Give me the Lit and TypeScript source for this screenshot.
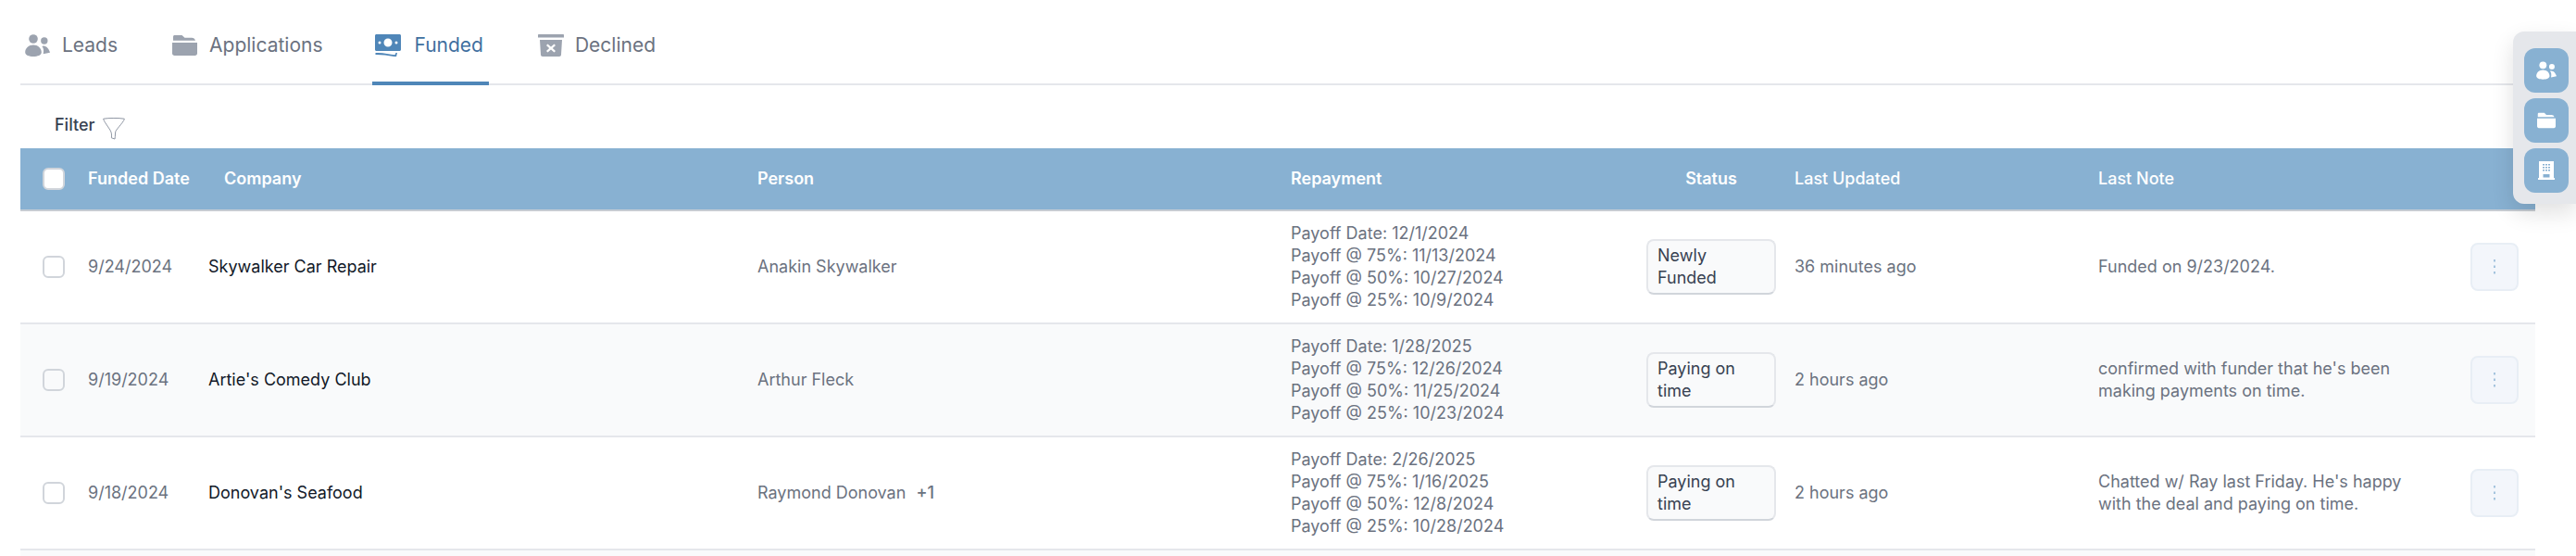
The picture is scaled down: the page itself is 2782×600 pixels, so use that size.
import { LitElement, html, css, svg } from "lit";
import { customElement } from "lit/decorators.js";

const users = svg`<circle cx="9" cy="5" r="4.8"/><path d="M9 11.5c-4.8 0-8.8 3.4-8.8 8 0 3 4.2 4.5 8.8 4.5s8.8-1.500 8.800-4.500c0-4.600-4-8-8.800-8z"/><circle cx="20.800" cy="7" r="3.700"/><path d="M20 12.500c3.300.2 6 3.300 7 7.300l-7.300 1.400c.5-3.300.7-6-1.300-8.200.5-.3 1-.5 1.600-.5z"/>`;
const folder = svg`<path d="M2 0h8.500l3 2.800H21c2 0 3.500 1.200 4 3H1V2c0-1 .5-2 1-2z"/><path d="M0 8h27v11.500c0 1.500-1 2.500-2.500 2.500h-22C1 22 0 21 0 19.500z"/>`;
const money = svg`<path fill-rule="evenodd" d="M1.500 0h25C27.300 0 28 .7 28 1.500v15c0 .8-.7 1.500-1.500 1.500h-25C.7 18 0 17.300 0 16.500v-15C0 .7.700 0 1.500 0zM14 4.500a4.500 4.500 0 1 0 0 9 4.500 4.500 0 0 0 0-9zM5 7.500a1.500 1.500 0 1 0 0 3 1.500 1.500 0 0 0 0-3zm18 0a1.500 1.500 0 1 0 0 3 1.500 1.500 0 0 0 0-3z"/><path d="M.5 20c7-.6 15 1.300 21 2.300l1-2.300h1.500l-1 4.400C15 23 7 21.800.5 22z"/>`;
const trash = svg`<path d="M1 0h26c.6 0 1 .4 1 1v2.500H0V1c0-.6.400-1 1-1z"/><path fill-rule="evenodd" d="M2 6h24l-1 16c0 1.200-.8 2-2 2H5c-1.200 0-2-.8-2-2zM10.500 10.500L9 12l3.200 3L9 18l1.500 1.500 3.500-3 3.500 3L19 18l-3.200-3L19 12l-1.500-1.500-3.500 3z"/>`;
const building = svg`<path fill-rule="evenodd" d="M1 0h16v18h1v2H0v-2h1zM5 3v1.500h2V3zm3 0v1.500h2V3zm3 0v1.500h2V3zM5 6v1.500h2V6zm3 0v1.500h2V6zm3 0v1.500h2V6zM5 9v1.500h2V9zm3 0v1.500h2V9zm3 0v1.500h2V9zM5.500 14v3.500h7V14z"/>`;

type Row = { date: string; company: string; person: string; extra?: string; pay: string[]; status: string; updated: string; note: string };
const rows: Row[] = [
  { date: "9/24/2024", company: "Skywalker Car Repair", person: "Anakin Skywalker", pay: ["Payoff Date: 12/1/2024", "Payoff @ 75%: 11/13/2024", "Payoff @ 50%: 10/27/2024", "Payoff @ 25%: 10/9/2024"], status: "Newly Funded", updated: "36 minutes ago", note: "Funded on 9/23/2024." },
  { date: "9/19/2024", company: "Artie's Comedy Club", person: "Arthur Fleck", pay: ["Payoff Date: 1/28/2025", "Payoff @ 75%: 12/26/2024", "Payoff @ 50%: 11/25/2024", "Payoff @ 25%: 10/23/2024"], status: "Paying on time", updated: "2 hours ago", note: "confirmed with funder that he's been making payments on time." },
  { date: "9/18/2024", company: "Donovan's Seafood", person: "Raymond Donovan", extra: "+1", pay: ["Payoff Date: 2/26/2025", "Payoff @ 75%: 1/16/2025", "Payoff @ 50%: 12/8/2024", "Payoff @ 25%: 10/28/2024"], status: "Paying on time", updated: "2 hours ago", note: "Chatted w/ Ray last Friday. He's happy with the deal and paying on time." },
];

@customElement("app-root")
export class AppRoot extends LitElement {
  static styles = css`
    :host { display: block; position: relative; height: 600px; overflow: hidden; background: #fff; font-family: Inter, "Liberation Sans", sans-serif; font-size: 18px; line-height: 24px; color: #6b7280; }
    .wrap { margin: 0 44px 0 22px; }
    .tabs { display: flex; gap: 48px; height: 90px; border-bottom: 2px solid #e5e7eb; }
    .tab { display: flex; align-items: center; height: 92px; box-sizing: border-box; padding: 10px 6px 0 0; font-size: 21px; color: #6b7280; border-bottom: 4px solid transparent; }
    .tab .ic { width: 45px; padding-left: 5px; box-sizing: border-box; display: flex; fill: #9ca3af; }
    .tab.active { color: #3f6f9f; border-bottom-color: #4f86b8; }
    .tab.active .ic { fill: #4f86b8; padding-left: 3px; }
    .filter { display: flex; align-items: center; gap: 9px; height: 68px; box-sizing: border-box; padding: 18px 0 0 37px; color: #374151; font-weight: 500; }
    .filter svg { fill: none; stroke: #8f96a3; stroke-width: 1; margin-top: 8px; }
    .row { display: grid; grid-template-columns: 73px 130px 593px 576px 384px 160px 328px 402px 70px; align-items: center; height: 122px; box-sizing: border-box; border-bottom: 2px solid #e5e7eb; }
    .row.head { height: 68px; background: #88b1d2; color: #fff; font-weight: 600; border-bottom-color: #c6ccd3; grid-template-columns: 73px 147px 576px 576px 384px 160px 328px 402px 70px; }
    .row.head .thin { font-weight: 500; }
    .row.head .st { text-align: center; width: 140px; }
    .row.alt { background: #f9fafb; }
    .cb { width: 24px; height: 24px; margin-left: 24px; box-sizing: border-box; border: 2px solid #d1d5db; border-radius: 6px; background: #fff; }
    .row.alt .cb { background: #f9fafb; }
    .company { color: #111827; }
    .extra { margin-left: 11px; font-weight: 500; }
    .badge { width: 140px; height: 60px; box-sizing: border-box; padding: 4px 10px; background: #f9fafb; border: 2px solid #e5e7eb; border-bottom-color: #d1d5db; border-radius: 8px; color: #374151; display: flex; align-items: center; }
    .note { padding-right: 60px; }
    .kebab { width: 52px; height: 52px; box-sizing: border-box; border: 2px solid #e8eef5; border-radius: 8px; background: #f3f6fb; display: flex; align-items: center; justify-content: center; }
    .kebab svg { fill: #a5c4de; }
    .tail { height: 6px; background: #f9fafb; }
    .side { position: absolute; top: 34px; right: 0; width: 68px; height: 186px; box-sizing: border-box; padding: 18px 8px 12px 12px; display: flex; flex-direction: column; gap: 6px; background: #e5e7eb; border-radius: 12px 0 0 12px; box-shadow: 0 10px 25px rgba(0,0,0,.12); }
    .side div { width: 48px; height: 48px; border-radius: 12px; background: #88b1d2; display: flex; align-items: center; justify-content: center; fill: #fff; }
  `;

  render() {
    const kebab = html`<div class="kebab"><svg width="2" height="16" viewBox="0 0 2 16"><rect width="2" height="2.500"/><rect y="6.500" width="2" height="2.500"/><rect y="13" width="2" height="2.500"/></svg></div>`;
    return html`
      <div class="wrap">
        <div class="tabs">
          <div class="tab"><span class="ic"><svg width="27" height="24" viewBox="0 0 27 24">${users}</svg></span>Leads</div>
          <div class="tab"><span class="ic"><svg width="27" height="22" viewBox="0 0 27 22">${folder}</svg></span>Applications</div>
          <div class="tab active"><span class="ic"><svg width="28" height="24" viewBox="0 0 28 24">${money}</svg></span>Funded</div>
          <div class="tab"><span class="ic"><svg width="28" height="24" viewBox="0 0 28 24">${trash}</svg></span>Declined</div>
        </div>
        <div class="filter">Filter
          <svg width="24" height="24" viewBox="0 0 24 24"><path d="M.7 1.200c6-1 16.500-1 22.600 0 .3 2-7 9.500-9.300 13.300-.8 1.500-.3 5-1 8.500l-3.600-1.200c.3-2.500.1-5.200-.7-7C6.500 10.500.4 3 .7 1.200z"/></svg>
        </div>
        <div class="row head">
          <div><div class="cb"></div></div>
          <div>Funded Date</div><div>Company</div><div>Person</div><div>Repayment</div>
          <div class="st">Status</div><div class="thin">Last Updated</div><div class="thin">Last Note</div><div></div>
        </div>
        ${rows.map((r, i) => html`
          <div class="row ${i === 1 ? "alt" : ""}">
            <div><div class="cb"></div></div>
            <div>${r.date}</div>
            <div class="company">${r.company}</div>
            <div>${r.person}${r.extra ? html`<span class="extra">${r.extra}</span>` : ""}</div>
            <div>${r.pay.map((p) => html`<div>${p}</div>`)}</div>
            <div><div class="badge">${r.status}</div></div>
            <div>${r.updated}</div>
            <div class="note">${r.note}</div>
            <div>${kebab}</div>
          </div>`)}
        <div class="tail"></div>
      </div>
      <div class="side">
        <div><svg width="22" height="20" viewBox="0 0 27 24">${users}</svg></div>
        <div><svg width="20" height="18" viewBox="0 0 27 22">${folder}</svg></div>
        <div><svg width="18" height="20" viewBox="0 0 18 20">${building}</svg></div>
      </div>
    `;
  }
}
